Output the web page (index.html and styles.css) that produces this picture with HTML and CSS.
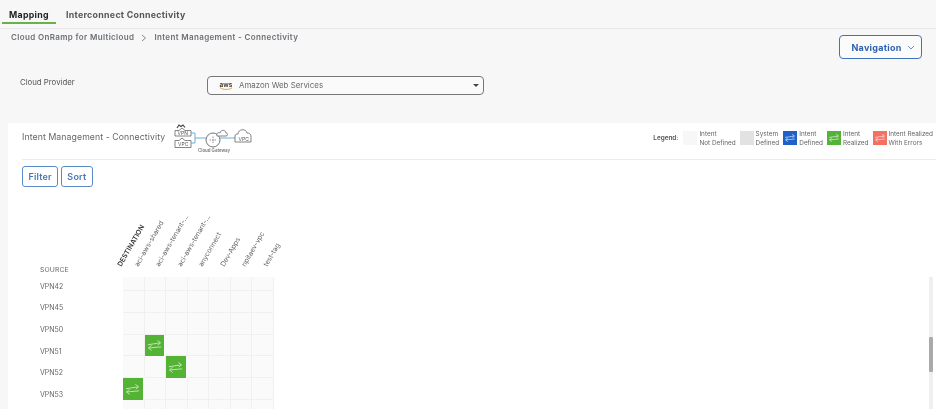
FILE: index.html
```html
<!DOCTYPE html>
<html lang="en">
<head>
<meta charset="utf-8">
<title>Intent Management - Connectivity</title>
<link rel="stylesheet" href="styles.css">
</head>
<body>
<svg class="defs" width="0" height="0" aria-hidden="true">
  <symbol id="arrows" viewBox="0 0 20 20">
    <path d="M3 9.200 L16 7.200 M13 4.600 L16.400 7.200 L13.400 9.600 M17 11.400 L4 12.600 M7 9.800 L3.600 12.600 L7 15.200" fill="none" stroke="currentColor" stroke-width=".9"/>
  </symbol>
</svg>
<nav class="tabs">
  <a class="tab active">Mapping</a>
  <a class="tab">Interconnect Connectivity</a>
</nav>
<div class="top">
  <div class="crumbs">
    <span>Cloud OnRamp for Multicloud</span>
    <svg class="crumb-sep" width="6" height="8" viewBox="0 0 6 8"><path d="M1 1l3.500 3L1 7" fill="none" stroke="#888" stroke-width="1"/></svg>
    <span>Intent Management - Connectivity</span>
  </div>
  <button class="nav-btn">Navigation
    <svg width="8" height="5" viewBox="0 0 8 5"><path d="M1 1l3 3 3-3" fill="none" stroke="#6f93c6" stroke-width="1"/></svg>
  </button>
</div>
<div class="provider">
  <label class="provider-label">Cloud Provider</label>
  <div class="select">
    <svg class="aws" width="14" height="11" viewBox="0 0 14 11">
      <text x="0.500" y="6.500" class="aws-text">aws</text>
      <path d="M1 7.600 C4 10 10 10 13 7.800" fill="none" stroke="#f0a030" stroke-width="1"/>
    </svg>
    <span class="select-text">Amazon Web Services</span>
    <span class="caret"></span>
  </div>
</div>
<section class="panel">
  <header class="panel-head">
    <div class="title-wrap">
      <h2 class="title">Intent Management - Connectivity</h2>
      <svg class="diagram" width="78" height="30" viewBox="0 0 78 30">
        <g fill="#fff" stroke="#666" stroke-width=".8">
          <path d="M1 12V6.500h4L8 4l3 2.500h6V12z"/>
          <path d="M1 23.500v-7h4L8 14l3 2.500h6v7z"/>
        </g>
        <path d="M3 4l2-3 2 1.500 2-1.500 2 2.500" fill="none" stroke="#444" stroke-width="1.200"/>
        <path d="M17 9h4v10h-4M21 14h12M46 14h16" fill="none" stroke="#5aa6d6" stroke-width=".9"/>
        <circle cx="39" cy="16" r="7" fill="#fff" stroke="#666" stroke-width=".9"/>
        <path d="M35.500 16h7M39 12.500v7" stroke="#777" stroke-width=".8" stroke-dasharray="1.500 1"/>
        <path d="M43 12c-1-3 2-4 3-3 1-4 6-3 6 0 2 0 2 3 0 3h-9z" fill="#fff" stroke="#666" stroke-width=".8"/>
        <path d="M61 18v-6c0-2 2-2 3-2 0-5 8-6 9-1 2 0 4 1 4 3v6z" fill="#fff" stroke="#666" stroke-width=".8"/>
        <text x="3.500" y="10.800" class="dia-text">VPN</text>
        <text x="4" y="22" class="dia-text">VPC</text>
        <text x="64.500" y="16.500" class="dia-text">VPC</text>
        <text x="24" y="27.500" class="dia-cap">Cloud Gateway</text>
      </svg>
    </div>
    <div class="legend">
      <span class="legend-title">Legend:</span>
      <div class="legend-item"><span class="swatch sw-none"></span><span class="legend-text">Intent<br>Not Defined</span></div>
      <div class="legend-item"><span class="swatch sw-system"></span><span class="legend-text">System<br>Defined</span></div>
      <div class="legend-item"><span class="swatch sw-defined"><svg width="14" height="14"><use href="#arrows"/></svg></span><span class="legend-text">Intent<br>Defined</span></div>
      <div class="legend-item"><span class="swatch sw-realized"><svg width="14" height="14"><use href="#arrows"/></svg></span><span class="legend-text">Intent<br>Realized</span></div>
      <div class="legend-item"><span class="swatch sw-error"><svg width="14" height="14"><use href="#arrows"/></svg></span><span class="legend-text">Intent Realized<br>With Errors</span></div>
    </div>
  </header>
  <div class="toolbar">
    <button class="tool-btn">Filter</button>
    <button class="tool-btn">Sort</button>
  </div>
  <div class="content">
    <div class="matrix">
      <div class="matrix-head">
        <div class="source">SOURCE</div>
        <div class="col-heads">
          <div class="col-head"><span class="dest">DESTINATION</span></div>
          <div class="col-head"><span>aci-aws-shared</span></div>
          <div class="col-head"><span>aci-aws-tenant-...</span></div>
          <div class="col-head"><span>aci-aws-tenant-...</span></div>
          <div class="col-head"><span>anyconnect</span></div>
          <div class="col-head"><span>Dev-Apps</span></div>
          <div class="col-head"><span>npitaev-vpc</span></div>
          <div class="col-head"><span>test-tag</span></div>
        </div>
      </div>
      <div class="matrix-body">
        <div class="row-labels">
          <div>VPN42</div><div>VPN45</div><div>VPN50</div><div>VPN51</div><div>VPN52</div><div>VPN53</div>
        </div>
        <div class="cells">
          <i></i><i></i><i></i><i></i><i></i><i></i><i></i>
          <i></i><i></i><i></i><i></i><i></i><i></i><i></i>
          <i></i><i></i><i></i><i></i><i></i><i></i><i></i>
          <i></i><i class="on"><svg width="19" height="19"><use href="#arrows"/></svg></i><i></i><i></i><i></i><i></i><i></i>
          <i></i><i></i><i class="on"><svg width="19" height="19"><use href="#arrows"/></svg></i><i></i><i></i><i></i><i></i>
          <i class="on"><svg width="19" height="19"><use href="#arrows"/></svg></i><i></i><i></i><i></i><i></i><i></i><i></i>
          <i></i><i></i><i></i><i></i><i></i><i></i><i></i>
        </div>
      </div>
    </div>
    <div class="scrollbar"><div class="thumb"></div></div>
  </div>
</section>
</body>
</html>
```
FILE: styles.css
```css
* { box-sizing: border-box; }
html, body { margin: 0; height: 100%; overflow: hidden; }
body {
  width: 936px;
  height: 409px;
  background: #f7f7f7;
  font-family: Inter, "Liberation Sans", sans-serif;
  color: #666;
  filter: blur(.35px);
}
.defs { position: absolute; }

.tabs {
  display: flex;
  height: 29px;
  padding: 0 0 0 2px;
  border-bottom: 1px solid #e6e6e6;
}
.tab {
  height: 24px;
  padding: 9px 7px 0;
  font-size: 8.800px;
  line-height: 11px;
  font-weight: 700;
  letter-spacing: .3px;
  color: #555;
  margin-right: 3px;
}
.tab.active { color: #222; border-bottom: 2px solid #6ab04c; }

.top {
  display: flex;
  justify-content: space-between;
  align-items: flex-start;
  padding: 0 14px 0 11px;
  height: 47px;
}
.crumbs {
  display: flex;
  align-items: center;
  gap: 7px;
  padding-top: 3px;
  font-size: 8px;
  line-height: 11px;
  font-weight: 600;
  letter-spacing: .36px;
  color: #6b6f76;
}
.nav-btn {
  display: flex;
  align-items: center;
  gap: 5px;
  width: 83px;
  height: 24px;
  margin-top: 6px;
  padding: 0 0 0 11.500px;
  background: #fbfbfb;
  border: 1.500px solid #3d74bb;
  border-radius: 4px;
  font: 700 9px Inter, "Liberation Sans", sans-serif;
  letter-spacing: .25px;
  color: #2f62ad;
}

.provider {
  display: flex;
  align-items: flex-start;
  padding-left: 20px;
  height: 47px;
}
.provider-label {
  width: 187px;
  padding-top: 1px;
  font-size: 7.800px;
  line-height: 11px;
  color: #555;
}
.select {
  display: flex;
  align-items: center;
  width: 277px;
  height: 18.500px;
  padding-left: 11px;
  border: 1.500px solid #777;
  border-radius: 4px;
  background: #fafafa;
}
.aws-text { font: 700 6.400px Inter, "Liberation Sans", sans-serif; fill: #444; }
.select-text {
  flex: 1;
  margin-left: 6px;
  font-size: 7.900px;
  color: #6a6a6a;
}
.caret {
  width: 0;
  height: 0;
  margin-right: 4px;
  border: 3px solid transparent;
  border-top: 3px solid #444;
  border-bottom: 0;
}

.panel {
  margin-left: 8px;
  height: 286px;
  background: #fff;
  overflow: hidden;
}
.panel-head {
  display: flex;
  justify-content: space-between;
  margin-left: 14px;
  height: 37px;
  border-bottom: 1px solid #ececf0;
}
.title-wrap { display: flex; align-items: flex-start; }
.title {
  margin: 8px 9px 0 0;
  font-size: 8.700px;
  line-height: 12px;
  font-weight: 400;
  letter-spacing: .1px;
  color: #666;
}
.diagram { margin-top: 1px; }
.dia-text { font: 5px Inter, "Liberation Sans", sans-serif; fill: #555; }
.dia-cap { font: 600 4.400px Inter, "Liberation Sans", sans-serif; fill: #777; }

.legend {
  display: flex;
  align-items: flex-start;
  padding: 8px 3px 0 0;
  font-size: 6.400px;
  line-height: 8.500px;
  color: #666;
}
.legend-title { font-weight: 600; margin: 3px 5px 0 0; color: #555; }
.legend-item { display: flex; align-items: flex-start; margin-right: 4px; gap: 2px; }
.legend-item:last-child { margin-right: 0; }
.legend-text { white-space: nowrap; margin-top: -1px; }
.swatch { display: block; width: 14px; height: 14px; color: #e8f3ff; }
.swatch svg { display: block; }
.sw-none { background: #f7f7f7; }
.sw-system { background: #e2e2e2; }
.sw-defined { background: #1e62c8; }
.sw-realized { background: #54b234; }
.sw-error { background: #f7705f; }

.toolbar {
  display: flex;
  gap: 2.500px;
  padding: 6px 0 0 14px;
}
.tool-btn {
  height: 21px;
  padding: 0 5.500px;
  background: #fff;
  border: 1.500px solid #5b8bc6;
  border-radius: 3px;
  font: 600 9px Inter, "Liberation Sans", sans-serif;
  letter-spacing: .2px;
  color: #4a76b0;
}

.content {
  display: flex;
  justify-content: space-between;
}
.matrix { width: 300px; padding-left: 32px; }
.matrix-head { display: flex; height: 88.500px; }
.source {
  width: 83px;
  align-self: flex-end;
  padding-bottom: 2px;
  font-size: 6.800px;
  line-height: 8px;
  color: #666;
  letter-spacing: .1px;
}
.col-heads { display: flex; align-items: flex-end; }
.col-head {
  width: 21.500px;
  height: 100%;
  display: flex;
  align-items: flex-end;
  padding-bottom: 8px;
}
.col-head:first-child { width: 16.500px; }
.col-head span {
  display: block;
  width: 0;
  white-space: nowrap;
  font-size: 6.900px;
  line-height: 9px;
  color: #666;
  transform-origin: 0 100%;
  transform: rotate(-60deg);
}
.col-head .dest { font-weight: 600; font-size: 6.900px; color: #333; }

.matrix-body { display: flex; }
.row-labels { width: 83px; }
.row-labels div {
  height: 21.700px;
  font-size: 7px;
  line-height: 21.700px;
  color: #666;
}
.cells {
  display: grid;
  grid-template-columns: repeat(7, 21.500px);
  grid-template-rows: 14px repeat(6, 21.800px);
  margin-top: 1.500px;
  background: #fafafa;
}
.cells i {
  display: block;
  border-right: 1px solid #f0f0f0;
  border-bottom: 1px solid #f0f0f0;
}
.cells .on {
  margin-right: 2px;
  background: #54b234;
  border: 0;
  color: #cfeac2;
  display: flex;
  align-items: center;
  justify-content: center;
}

.scrollbar {
  width: 4.500px;
  height: 132px;
  margin: 90px 3px 0 0;
  padding-top: 60px;
  background: #efefef;
}
.thumb { height: 35px; background: #aaa; border-radius: 1px; }
```
